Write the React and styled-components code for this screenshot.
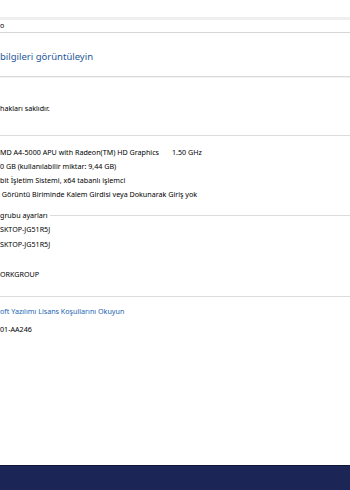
import React from 'react';
import styled, { createGlobalStyle } from 'styled-components';

const GlobalStyle = createGlobalStyle`
  html, body {
    margin: 0;
    padding: 0;
    background: #ffffff;
  }
  body {
    font-family: "Noto Sans", "Open Sans", sans-serif;
    color: #000;
  }
`;

const specs = [
  { label: 'MD A4-5000 APU with Radeon(TM) HD Graphics', value: '1.50 GHz' },
  { label: '0 GB (kullanılabilir miktar: 9,44 GB)' },
  { label: 'bit İşletim Sistemi, x64 tabanlı işlemci' },
  { label: ' Görüntü Biriminde Kalem Girdisi veya Dokunarak Giriş yok' },
];

const App = () => {
  return (
    <Page>
      <GlobalStyle />
      <TopBand />
      <Breadcrumb>o</Breadcrumb>
      <TitleBar>
        <Title>bilgileri görüntüleyin</Title>
      </TitleBar>
      <Copyright>
        <Row>hakları saklıdır.</Row>
      </Copyright>

      <Section>
        {specs.map((s, i) => (
          <Row key={i}>
            <Label wide={!!s.value}>{s.label}</Label>
            {s.value && <span>{s.value}</span>}
          </Row>
        ))}
        <GroupHeading>
          <span>grubu ayarları</span>
          <Rule />
        </GroupHeading>
        <NameRow>SKTOP-JG51R5J</NameRow>
        <NameRow>SKTOP-JG51R5J</NameRow>
        <NameRow gap>ORKGROUP</NameRow>
      </Section>

      <Footer>
        <Link>oft Yazılımı Lisans Koşullarını Okuyun</Link>
        <Row>01-AA246</Row>
      </Footer>

      <Spacer />
      <Taskbar />
    </Page>
  );
};

//Styling
const Page = styled.div`
  width: 350px;
  height: 490px;
  overflow: hidden;
  display: flex;
  flex-direction: column;
  background: #fff;
  font-size: 7.15px;
`;

const TopBand = styled.div`
  height: 3px;
  margin-top: 17px;
  background: #efefef;
`;

const Breadcrumb = styled.div`
  height: 12px;
  line-height: 12px;
  font-size: 7px;
  border-bottom: 1px solid #d6d6d6;
`;

const TitleBar = styled.div`
  height: 44px;
  display: flex;
  align-items: center;
  padding-top: 3px;
  box-sizing: border-box;
  border-bottom: 1px solid #dadada;
  box-shadow: 0 1px 0 #f2f2f2;
`;

const Title = styled.h1`
  margin: 0;
  font-weight: 400;
  font-size: 9.5px;
  color: #24579a;
`;

const Copyright = styled.div`
  height: 59px;
  display: flex;
  align-items: center;
  padding-top: 4px;
  box-sizing: border-box;
  border-bottom: 1px solid #dcdcdc;
`;

const Row = styled.div`
  display: flex;
  line-height: 14px;
  height: 14px;
  white-space: pre;
`;

const Label = styled.span`
  width: ${p => (p.wide ? '172px' : 'auto')};
  white-space: pre;
`;

const Section = styled.div`
  padding-top: 9px;
  padding-bottom: 14px;
  border-bottom: 1px solid #dcdcdc;
`;

const GroupHeading = styled.div`
  display: flex;
  align-items: center;
  gap: 2px;
  margin-top: 7px;
  height: 14px;
  line-height: 14px;
`;

const Rule = styled.div`
  flex: 1;
  height: 1px;
  background: #dcdcdc;
`;

const NameRow = styled.div`
  line-height: 15px;
  height: 15px;
  margin-top: ${p => (p.gap ? '15px' : '0')};
`;

const Footer = styled.div`
  padding-top: 7px;
  display: flex;
  flex-direction: column;
  gap: 4px;
`;

const Link = styled.div`
  line-height: 14px;
  height: 14px;
  color: #1a64b4;
`;

const Spacer = styled.div`
  flex: 1;
`;

const Taskbar = styled.div`
  height: 24px;
  background: #1c2656;
  border-top: 1px solid #0f1636;
`;

export default App;
